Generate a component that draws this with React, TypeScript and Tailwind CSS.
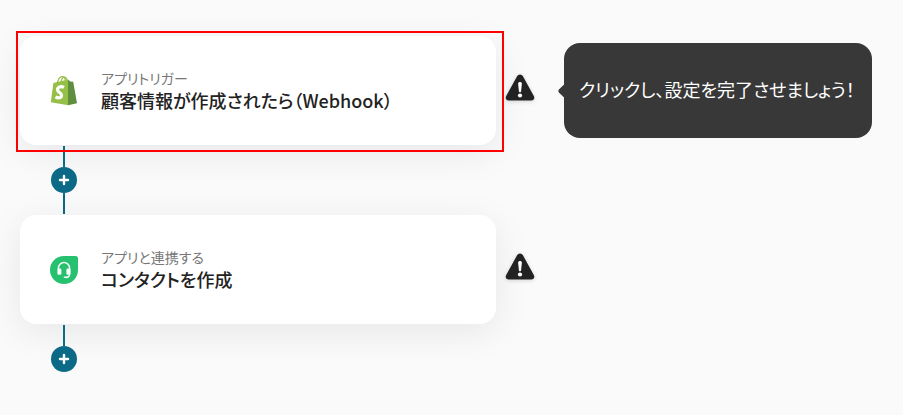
import type { ReactNode } from "react";

function ShopifyIcon() {
  return (
    <svg viewBox="0 0 28 32" className="h-8 w-7 shrink-0" aria-hidden="true">
      <path d="M7 9.5C7.8 5 10 1.6 12.3 1.6S15.4 4 15.6 7M10.8 8C11.4 4.6 13 2 14.8 2.2S17 4.6 17.3 6.5" fill="none" stroke="#95bf47" strokeWidth="1.2" />
      <path d="M3.4 7.9 18 4.4l.5 25.8L.8 27.2z" fill="#95bf47" />
      <path d="M18 4.4 20.2 6.5l3 .3L27 28.2 18 30.2z" fill="#5e8e3e" />
      <path d="M14 12.4c-3.4-1.7-6.5-.2-6.5 2.3 0 2.6 4 3 4 5.5 0 2.9-3.2 3.3-6 1.6" fill="none" stroke="#fff" strokeWidth="3.2" />
    </svg>
  );
}

function ContactIcon() {
  return (
    <svg viewBox="0 0 28 28" className="size-7 shrink-0" aria-hidden="true">
      <path d="M14 0h11.5A2.5 2.5 0 0 1 28 2.5V14A14 14 0 1 1 14 0z" fill="#25c16f" />
      <path d="M8.4 13.6v-1.4a5.6 5.6 0 0 1 11.2 0V18c0 2-1.6 3.4-3.6 3.4" fill="none" stroke="#fff" strokeWidth="1.5" />
      <rect x="7.4" y="12.6" width="4" height="6.2" rx="1.4" fill="#fff" />
      <rect x="16.4" y="12.6" width="4" height="6.2" rx="1.4" fill="#fff" />
      <rect x="13.6" y="20.4" width="3.6" height="1.6" rx=".8" fill="#fff" />
    </svg>
  );
}

function WarningIcon() {
  return (
    <svg viewBox="0 0 30 34" className="h-[34px] w-[30px] shrink-0 drop-shadow-sm" role="img" aria-label="警告">
      <path d="M12.2 2.1a3.2 3.2 0 0 1 5.6 0l11 19.8c1.3 2.2 0 4.5-2.6 4.5H3.8c-2.6 0-3.9-2.3-2.6-4.5z" fill="#222" />
      <path d="M13.1 9.6c0-2.2 3.8-2.2 3.8 0l-.8 7.6c-.1 1.3-2.1 1.3-2.2 0z" fill="#fff" />
      <circle cx="15" cy="21.5" r="2.1" fill="#fff" />
    </svg>
  );
}

function Step({ icon, kind, title, highlighted, children }: {
  icon: ReactNode;
  kind: string;
  title: string;
  highlighted?: boolean;
  children?: ReactNode;
}) {
  return (
    <div className="flex items-center">
      <div className="relative min-w-0 max-w-[476px] flex-1">
        <button
          type="button"
          className="flex min-h-[109px] w-full items-center gap-[23px] rounded-2xl bg-white px-[30px] text-left shadow-[0_8px_36px_rgba(0,0,0,0.08)]"
        >
          {icon}
          <span className="flex min-w-0 flex-col pb-0.5">
            <span className="text-sm leading-5 text-[#777]">{kind}</span>
            <span className="text-lg leading-6 font-medium text-[#222]">{title}</span>
          </span>
        </button>
        {highlighted && (
          <span className="pointer-events-none absolute -top-[5px] -right-2 -bottom-[7px] -left-1 z-10 border-2 border-[#ff0000]" />
        )}
      </div>
      <div className="ml-[9px] flex shrink-0">
        <WarningIcon />
      </div>
      {children}
    </div>
  );
}

function AddStep({ last }: { last?: boolean }) {
  return (
    <div className="relative ml-[31px] flex w-[26px] flex-col items-center pt-px">
      <span className="h-[21px] w-0.5 bg-[#0b6a85]" />
      <button
        type="button"
        aria-label="ステップを追加"
        className="flex size-[26px] items-center justify-center rounded-full bg-[#0b6a85]"
      >
        <svg viewBox="0 0 12 12" className="size-3" aria-hidden="true">
          <path d="M6 2v8M2 6h8" stroke="#fff" strokeWidth="2.4" strokeLinecap="round" />
        </svg>
      </button>
      {!last && <span className="mb-px h-[21px] w-0.5 bg-[#0b6a85]" />}
    </div>
  );
}

export default function App() {
  return (
    <main className="min-h-screen bg-[#fafafa] pt-9 pr-[31px] pb-10 pl-5 font-['Noto_Sans_CJK_JP',sans-serif] [font-feature-settings:'palt']">
      <Step icon={<ShopifyIcon />} kind="アプリトリガー" title="顧客情報が作成されたら（Webhook）" highlighted>
        <div role="tooltip" className="relative ml-[29px] flex min-h-[95px] w-[308px] shrink-0 items-center rounded-2xl bg-[#383838] px-[15px] pb-1">
          <span className="absolute top-1/2 -left-1 size-3 -translate-y-1/2 rotate-45 rounded-xs bg-[#383838]" />
          <p className="text-lg leading-7 whitespace-nowrap text-white">クリックし、設定を完了させましょう！</p>
        </div>
      </Step>
      <AddStep />
      <Step icon={<ContactIcon />} kind="アプリと連携する" title="コンタクトを作成" />
      <AddStep last />
    </main>
  );
}
